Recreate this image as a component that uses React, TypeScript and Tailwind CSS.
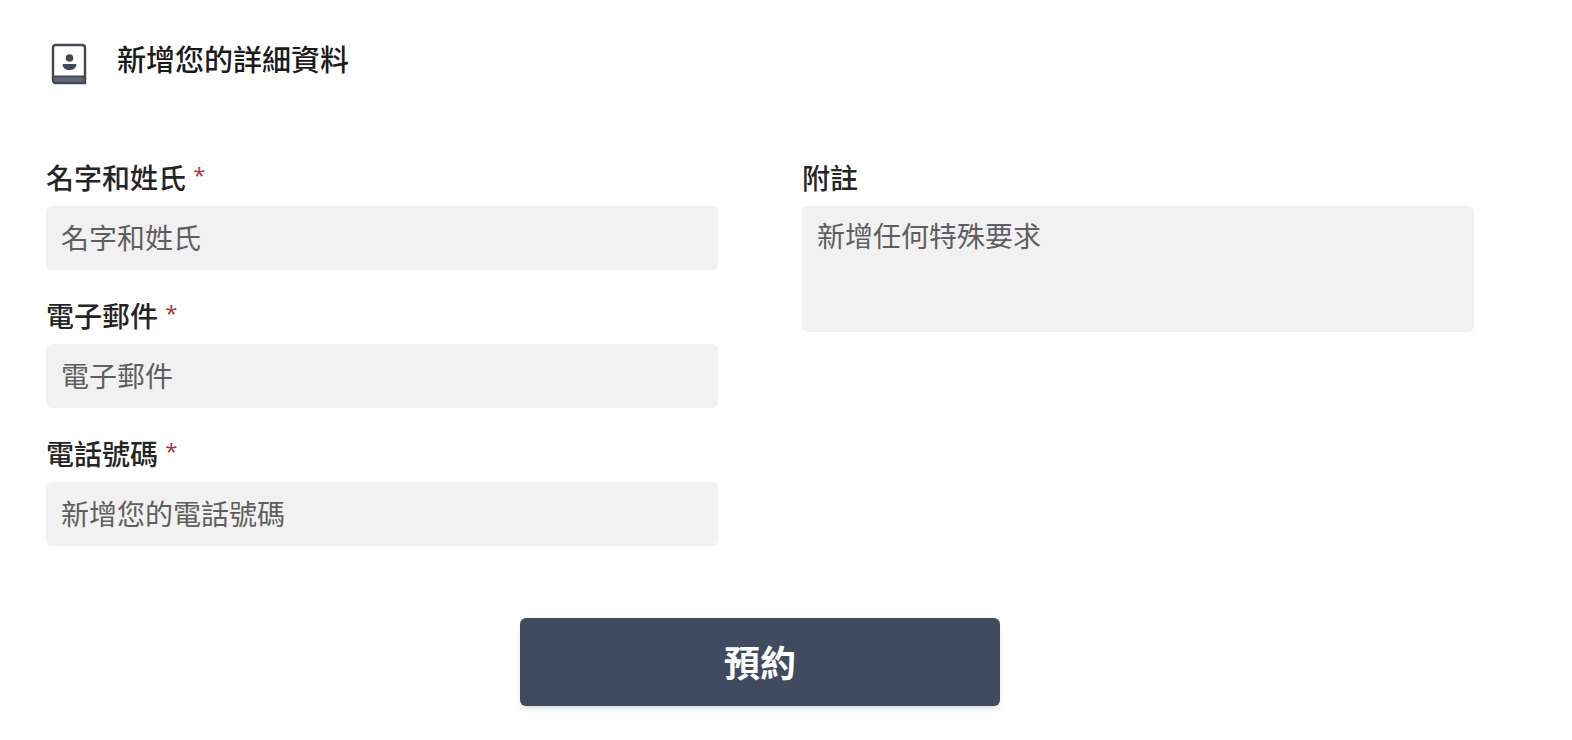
import type { ReactNode } from 'react';

interface FieldProps {
  id: string;
  label: string;
  required?: boolean;
  children: ReactNode;
}

const controlClass =
  'block w-full rounded-md bg-[#f1f1f1] px-[15px] text-[28px] text-[#252525] placeholder:text-[#5f5f5f] placeholder:opacity-100 outline-none focus:ring-2 focus:ring-[#404b60]';

function ContactIcon() {
  return (
    <svg className="h-[42px] w-9 shrink-0" viewBox="0 0 36 42" fill="none" aria-hidden="true">
      <path d="M2 33H34V40H5Q2 40 2 37Z" fill="#62677a" />
      <path d="M5 2H31Q34 2 34 5V40H5Q2 40 2 37V5Q2 2 5 2Z" stroke="#434859" strokeWidth="2.4" />
      <path d="M2 33.5H34" stroke="#434859" strokeWidth="2" />
      <circle cx="18.5" cy="15" r="3.8" fill="#434859" />
      <path d="M11.5 22Q11.5 21 12.5 21H24.5Q25.5 21 25.5 22C25 25 22 27 18.5 27S12 25 11.5 22Z" fill="#434859" />
    </svg>
  );
}

function Field({ id, label, required, children }: FieldProps) {
  return (
    <div>
      <label htmlFor={id} className="mb-2.5 block text-[28px] leading-9 font-medium text-[#252525]">
        {label}
        {required && <span className="font-normal text-[#a4373a]"> <span className="align-top text-[22px] leading-7">*</span></span>}
      </label>
      {children}
    </div>
  );
}

export default function App() {
  return (
    <main
      lang="zh-Hant"
      className="min-h-screen bg-white pt-[43px] pr-[98px] pb-8 pl-[46px] font-['Open_Sans','Noto_Sans_CJK_TC',sans-serif]"
    >
      <header className="flex items-start gap-[30px] pl-[5px]">
        <ContactIcon />
        <h1 className="text-[29px] leading-[34px] font-medium text-[#1b1b1b]">新增您的詳細資料</h1>
      </header>

      <form className="mt-[75px]" onSubmit={(e) => e.preventDefault()}>
        <div className="grid grid-cols-2 items-start gap-[84px]">
          <div className="space-y-7">
            <Field id="name" label="名字和姓氏" required>
              <input id="name" type="text" required placeholder="名字和姓氏" className={`${controlClass} h-16`} />
            </Field>
            <Field id="email" label="電子郵件" required>
              <input id="email" type="email" required placeholder="電子郵件" className={`${controlClass} h-16`} />
            </Field>
            <Field id="phone" label="電話號碼" required>
              <input id="phone" type="tel" required placeholder="新增您的電話號碼" className={`${controlClass} h-16`} />
            </Field>
          </div>

          <Field id="notes" label="附註">
            <textarea
              id="notes"
              placeholder="新增任何特殊要求"
              className={`${controlClass} h-[126px] resize-none py-3 leading-9`}
            />
          </Field>
        </div>

        <button
          type="submit"
          className="mx-auto mt-[72px] block h-[88px] w-[480px] rounded-md bg-[#404b60] pt-1 text-4xl font-bold text-white shadow-md"
        >
          預約
        </button>
      </form>
    </main>
  );
}
